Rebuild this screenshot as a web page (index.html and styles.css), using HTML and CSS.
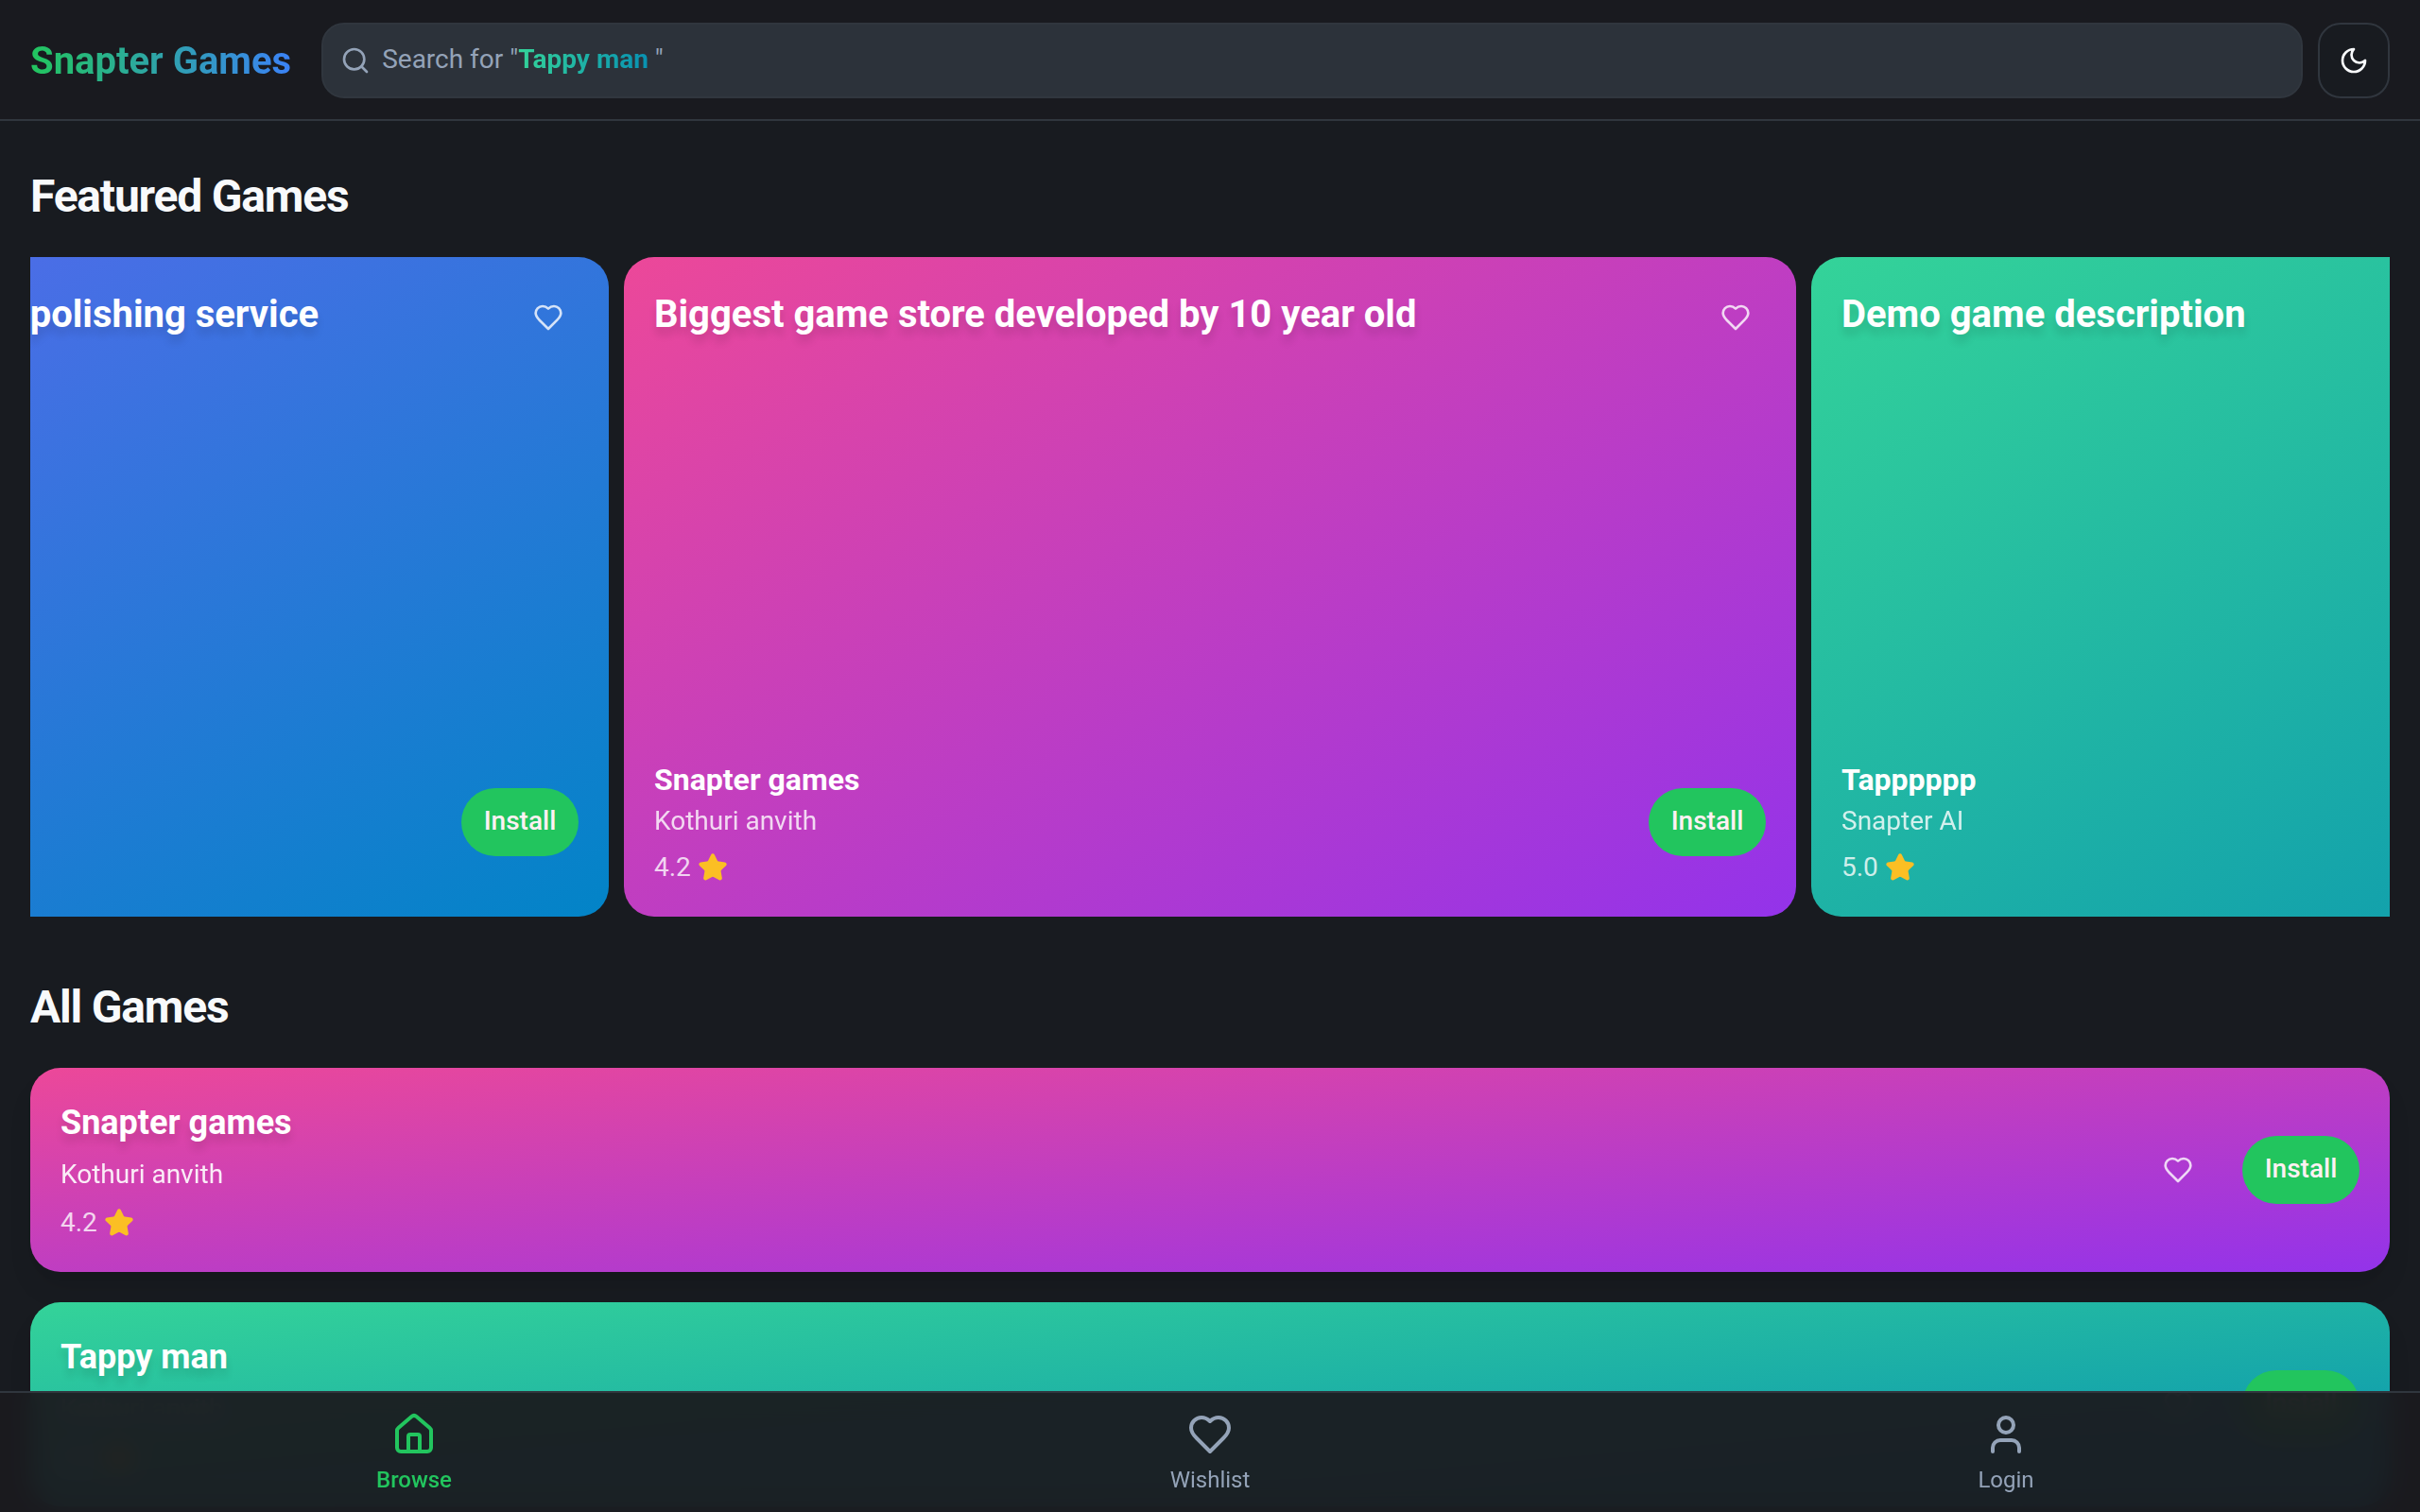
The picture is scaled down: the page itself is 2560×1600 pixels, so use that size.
FILE: index.html
```html
<!DOCTYPE html>
<html lang="en">
<head>
<meta charset="utf-8">
<meta name="viewport" content="width=device-width, initial-scale=1">
<title>Snapter Games</title>
<link rel="stylesheet" href="styles.css">
</head>
<body>
<svg class="sprite" aria-hidden="true">
  <symbol id="heart" viewBox="0 0 24 24"><path d="M19 14c1.49-1.46 3-3.21 3-5.5A5.5 5.5 0 0 0 16.5 3c-1.76 0-3 .5-4.5 2-1.5-1.5-2.74-2-4.5-2A5.5 5.5 0 0 0 2 8.500c0 2.300 1.500 4.050 3 5.500l7 7Z"/></symbol>
  <symbol id="star" viewBox="0 0 24 24"><path d="M11.525 2.295a.53.53 0 0 1 .95 0l2.310 4.679a2.123 2.123 0 0 0 1.595 1.160l5.166.756a.53.53 0 0 1 .294.904l-3.736 3.638a2.123 2.123 0 0 0-.611 1.878l.882 5.140a.53.53 0 0 1-.771.560l-4.618-2.428a2.122 2.122 0 0 0-1.973 0L6.396 21.010a.53.53 0 0 1-.770-.560l.881-5.139a2.122 2.122 0 0 0-.611-1.879L2.160 9.795a.53.53 0 0 1 .294-.906l5.165-.755a2.122 2.122 0 0 0 1.597-1.160z"/></symbol>
</svg>

<header class="topbar">
  <a class="brand" href="#">Snapter Games</a>
  <label class="search">
    <svg class="icon" viewBox="0 0 24 24" aria-hidden="true"><circle cx="11" cy="11" r="8"/><path d="m21 21-4.300-4.300"/></svg>
    <span class="search-field">
      <input class="search-input" type="text" aria-label="Search games">
      <span class="search-hint">Search for "<span class="search-term">Tappy man</span> "</span>
    </span>
  </label>
  <button class="theme-toggle" type="button" aria-label="Toggle theme">
    <svg class="icon" viewBox="0 0 24 24" aria-hidden="true"><path d="M12 3a6 6 0 0 0 9 9 9 9 0 1 1-9-9Z"/></svg>
  </button>
</header>

<main class="content">
  <section class="section">
    <h2 class="heading">Featured Games</h2>
    <div class="carousel">
      <article class="card slide blue">
        <div class="slide-top">
          <h3 class="slide-title">Book your trusted bike wash and polishing service</h3>
          <button class="wish" type="button" aria-label="Add to wishlist"><svg class="icon"><use href="#heart"/></svg></button>
        </div>
        <div class="slide-bottom">
          <div class="details">
            <h4 class="slide-name">Polish</h4>
            <p class="maker">Snapter AI</p>
            <p class="rating">4.5 <svg class="icon star"><use href="#star"/></svg></p>
          </div>
          <button class="install" type="button">Install</button>
        </div>
      </article>
      <article class="card slide pink">
        <div class="slide-top">
          <h3 class="slide-title">Biggest game store developed by 10 year old</h3>
          <button class="wish" type="button" aria-label="Add to wishlist"><svg class="icon"><use href="#heart"/></svg></button>
        </div>
        <div class="slide-bottom">
          <div class="details">
            <h4 class="slide-name">Snapter games</h4>
            <p class="maker">Kothuri anvith</p>
            <p class="rating">4.2 <svg class="icon star"><use href="#star"/></svg></p>
          </div>
          <button class="install" type="button">Install</button>
        </div>
      </article>
      <article class="card slide green">
        <div class="slide-top">
          <h3 class="slide-title">Demo game description</h3>
          <button class="wish" type="button" aria-label="Add to wishlist"><svg class="icon"><use href="#heart"/></svg></button>
        </div>
        <div class="slide-bottom">
          <div class="details">
            <h4 class="slide-name">Tapppppp</h4>
            <p class="maker">Snapter AI</p>
            <p class="rating">5.0 <svg class="icon star"><use href="#star"/></svg></p>
          </div>
          <button class="install" type="button">Install</button>
        </div>
      </article>
    </div>
  </section>

  <section class="section">
    <h2 class="heading">All Games</h2>
    <div class="list">
      <article class="card row pink">
        <div class="row-info">
          <h3 class="row-name">Snapter games</h3>
          <p class="maker row-maker">Kothuri anvith</p>
          <p class="rating">4.2 <svg class="icon star"><use href="#star"/></svg></p>
        </div>
        <div class="row-actions">
          <button class="wish" type="button" aria-label="Add to wishlist"><svg class="icon"><use href="#heart"/></svg></button>
          <button class="install" type="button">Install</button>
        </div>
      </article>
      <article class="card row green">
        <div class="row-info">
          <h3 class="row-name">Tappy man</h3>
          <p class="maker row-maker">Kothuri anvith</p>
          <p class="rating">4.5 <svg class="icon star"><use href="#star"/></svg></p>
        </div>
        <div class="row-actions">
          <button class="wish" type="button" aria-label="Add to wishlist"><svg class="icon"><use href="#heart"/></svg></button>
          <button class="install" type="button">Install</button>
        </div>
      </article>
    </div>
  </section>
</main>

<nav class="tabs" aria-label="Main">
  <a class="tab active" href="#">
    <svg class="icon" viewBox="0 0 24 24" aria-hidden="true"><path d="M15 21v-8a1 1 0 0 0-1-1h-4a1 1 0 0 0-1 1v8"/><path d="M3 10a2 2 0 0 1 .709-1.528l7-5.999a2 2 0 0 1 2.582 0l7 5.999A2 2 0 0 1 21 10v9a2 2 0 0 1-2 2H5a2 2 0 0 1-2-2z"/></svg>
    <span>Browse</span>
  </a>
  <a class="tab" href="#">
    <svg class="icon" aria-hidden="true"><use href="#heart"/></svg>
    <span>Wishlist</span>
  </a>
  <a class="tab" href="#">
    <svg class="icon" viewBox="0 0 24 24" aria-hidden="true"><path d="M19 21v-2a4 4 0 0 0-4-4H9a4 4 0 0 0-4 4v2"/><circle cx="12" cy="7" r="4"/></svg>
    <span>Login</span>
  </a>
</nav>
</body>
</html>
```
FILE: styles.css
```css
:root {
  --page: #181b20;
  --bar: #191a1f;
  --field: #2c323a;
  --line: #30363e;
  --text: #f8fafc;
  --muted: #94a3b8;
  --accent: #22c55e;
}

* { box-sizing: border-box; margin: 0; }

body {
  background: var(--page);
  color: var(--text);
  font-family: Roboto, "Liberation Sans", sans-serif;
  font-size: 28px;
  line-height: 40px;
  height: 100vh;
  overflow: hidden;
}

button, input { font: inherit; color: inherit; border: 0; padding: 0; background: none; }
a { text-decoration: none; color: inherit; }

.sprite { display: none; }

.icon {
  width: 32px;
  height: 32px;
  flex: none;
  fill: none;
  stroke: currentColor;
  stroke-width: 2;
  stroke-linecap: round;
  stroke-linejoin: round;
}

/* Header */
.topbar {
  display: flex;
  align-items: center;
  padding: 24px 32px 22px;
  background: var(--bar);
  border-bottom: 2px solid var(--line);
}

.brand {
  margin-right: 32px;
  padding-top: 2px;
  font-size: 40px;
  font-weight: 700;
  line-height: 56px;
  background: linear-gradient(to right, #22c55e, #3b82f6);
  background-clip: text;
  color: transparent;
}

.search {
  flex: 1;
  display: flex;
  align-items: center;
  gap: 12px;
  height: 80px;
  padding: 0 18px;
  margin-right: 16px;
  background: var(--field);
  border: 2px solid var(--line);
  border-radius: 24px;
  color: var(--muted);
}

.search-field { flex: 1; display: grid; padding-bottom: 2px; }
.search-input, .search-hint { grid-area: 1 / 1; }
.search-input { outline: none; width: 100%; }
.search-hint { pointer-events: none; }

.search-term {
  font-weight: 700;
  background: linear-gradient(to right, #34d399, #0891b2);
  background-clip: text;
  color: transparent;
}

.theme-toggle {
  display: grid;
  place-items: center;
  width: 76px;
  height: 80px;
  background: var(--page);
  border: 2px solid var(--line);
  border-radius: 24px;
}

/* Sections */
.content { display: grid; grid-template-columns: minmax(0, 1fr); gap: 64px; padding: 48px 32px 160px; }

.heading {
  margin-bottom: 32px;
  font-size: 48px;
  font-weight: 700;
  line-height: 64px;
  letter-spacing: -0.025em;
}

.card { padding: 32px; border-radius: 32px; color: #fff; }
.pink { background: linear-gradient(to bottom right, #ec4899, #9333ea); }
.green { background: linear-gradient(to bottom right, #34d399, #0891b2); }
.blue { background: linear-gradient(to bottom right, #6366f1, #0284c7); }

/* Featured carousel, resting on its middle slide */
.carousel { display: flex; justify-content: center; gap: 16px; overflow: hidden; }

.slide {
  flex: none;
  display: flex;
  flex-direction: column;
  justify-content: space-between;
  width: calc(50% - 8px);
  aspect-ratio: 16 / 9;
}

.slide-top { display: flex; justify-content: space-between; align-items: flex-start; }

.slide-title {
  font-size: 40px;
  font-weight: 700;
  line-height: 58px;
  text-shadow: 0 8px 8px rgba(0, 0, 0, 0.12);
}

.slide-bottom { display: flex; justify-content: space-between; align-items: center; }
.slide-name { font-size: 32px; font-weight: 700; line-height: 46px; margin-bottom: 1px; }
.maker { opacity: 0.8; }
.rating { display: flex; align-items: center; gap: 7px; margin-top: 9px; color: rgba(255, 255, 255, 0.8); }
.star { color: #fbbf24; fill: #fbbf24; }

.wish {
  display: grid;
  place-items: center;
  width: 64px;
  height: 64px;
  color: rgba(255, 255, 255, 0.8);
}

.install {
  width: 124px;
  height: 72px;
  padding-bottom: 2px;
  border-radius: 36px;
  background: var(--accent);
  color: #fff1f2;
  font-weight: 500;
}

/* Game list */
.list { display: grid; gap: 32px; }

.row {
  display: flex;
  justify-content: space-between;
  align-items: center;
  box-shadow: 0 20px 30px -6px rgba(0, 0, 0, 0.1), 0 8px 12px -8px rgba(0, 0, 0, 0.1);
}

.row-name {
  margin-bottom: 9px;
  font-size: 36px;
  font-weight: 700;
  line-height: 52px;
  text-shadow: 0 8px 8px rgba(0, 0, 0, 0.12);
}

.row-maker { margin-bottom: 11px; opacity: 0.9; }
.row-info .rating { margin-top: 0; }
.row-actions { display: flex; align-items: center; gap: 36px; }

/* Bottom navigation */
.tabs {
  position: fixed;
  inset: auto 0 0;
  display: grid;
  grid-template-columns: repeat(3, 1fr);
  gap: 30px;
  padding: 20px 32px 18px;
  background: rgba(26, 26, 31, 0.95);
  border-top: 2px solid var(--line);
  backdrop-filter: blur(12px);
}

.tab {
  display: flex;
  flex-direction: column;
  align-items: center;
  gap: 8px;
  color: var(--muted);
  font-size: 24px;
  line-height: 32px;
}

.tab .icon { width: 48px; height: 48px; }
.active { color: var(--accent); font-weight: 500; }
```
